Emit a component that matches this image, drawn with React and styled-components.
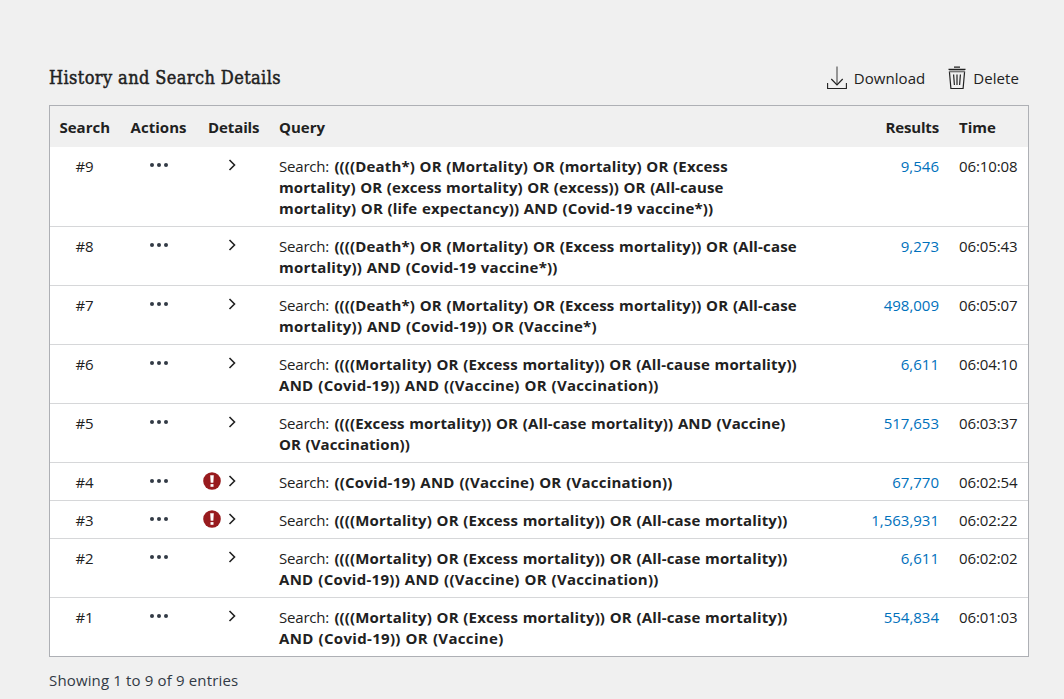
import React from "react";
import styled, { createGlobalStyle } from "styled-components";

const GlobalStyle = createGlobalStyle`
  *, *::before, *::after { box-sizing: border-box; }
  body {
    margin: 0;
    background: #f0f0f0;
    color: #212121;
    font-family: "Open Sans", "Noto Sans", sans-serif;
    font-size: 15px;
    line-height: 21px;
  }
`;

const Page = styled.main`
  width: 1064px;
  height: 699px;
  padding: 62px 35px 0 49px;
  overflow: hidden;
`;

const Heading = styled.header`
  display: flex;
  align-items: center;
  justify-content: space-between;
  height: 32px;
  margin-bottom: 11px;
  padding-right: 10px;
`;

const Title = styled.h2`
  margin: 0;
  padding-bottom: 2px;
  font-family: "DejaVu Serif Condensed", "DejaVu Serif", serif;
  font-stretch: condensed;
  font-size: 18px;
  font-weight: 400;
  letter-spacing: 0.4px;
  -webkit-text-stroke: 0.45px #212121;
  white-space: nowrap;
`;

const Tools = styled.div`
  display: flex;
  gap: 23px;
`;

const Tool = styled.button`
  display: flex;
  align-items: center;
  gap: 7px;
  padding: 0;
  border: 0;
  background: none;
  color: #212121;
  font: inherit;
  letter-spacing: 0.06px;
`;

const Table = styled.section`
  width: 980px;
  border: 1px solid #aeb0b5;
  background: #fff;
`;

const Row = styled.div`
  display: grid;
  grid-template-columns: 70px 78px 71px 561px 109px 89px;
  padding: 9px 0 7px;
  border-bottom: 1px solid #d6d7d9;
  &:last-child { border-bottom: 0; }
`;

const HeadRow = styled(Row)`
  height: 41px;
  padding: 11px 0 9px;
  border-bottom: 0;
  background: #f0f0f0;
  font-weight: 700;
`;

const Cell = styled.div`
  padding-left: ${(p) => p.$left || 0}px;
  text-align: ${(p) => p.$align || "left"};
  letter-spacing: ${(p) => p.$spacing || 0}px;
  white-space: nowrap;
`;

const NumberCell = styled(Cell)`
  padding-right: 1px;
`;

const IconCell = styled.div`
  display: flex;
  align-items: center;
  justify-content: flex-end;
  height: 17px;
  gap: 7px;
  padding-right: ${(p) => p.$right}px;
`;

const QueryCell = styled.div`
  padding-left: 10px;
`;

const Line = styled.div`
  white-space: nowrap;
`;

const Prefix = styled.span`
  display: inline-block;
  width: 55.4px;
  letter-spacing: -0.2px;
`;

const Term = styled.b`
  letter-spacing: ${(p) => p.$spacing}px;
  word-spacing: 0.6px;
`;

const Results = styled.a`
  color: #0071bc;
  text-align: right;
`;

const Footer = styled.footer`
  margin-top: 13px;
  color: #323a45;
  letter-spacing: 0.15px;
`;

const DownloadIcon = () => (
  <svg width="20" height="24" viewBox="0 0 20 24" fill="none" stroke="#212121">
    <path d="M10 .5v18" stroke="#777" strokeWidth="1.5" />
    <path d="M4.3 13l5.7 5.8 5.7-5.8" strokeWidth="1.2" />
    <path d="M.6 17v5.5h18.8V17" strokeWidth="1.1" />
  </svg>
);

const TrashIcon = () => (
  <svg width="18" height="24" viewBox="0 0 18 24" fill="none" stroke="#212121" strokeWidth="1.2">
    <path d="M.5 3.3h17M6 1.2h6M1.4 5.5l1.5 17h12.2l1.5-17M5.6 8.5l.8 10.5M9 8.5V19M12.4 8.5l-.8 10.5" />
    <path d="M1.2 5.4h15.6" stroke="#777" strokeWidth="1.9" />
  </svg>
);

const Dots = () => (
  <svg width="18" height="4" viewBox="0 0 18 4" fill="#323a45">
    <circle cx="2" cy="2" r="2" />
    <circle cx="9" cy="2" r="2" />
    <circle cx="16" cy="2" r="2" />
  </svg>
);

const Chevron = () => (
  <svg width="8" height="12" viewBox="0 0 8 12" fill="none" stroke="#212121" strokeWidth="1.6">
    <path d="M1.5 1l5 5-5 5" />
  </svg>
);

const Alert = () => (
  <svg width="18" height="18" viewBox="0 0 18 18">
    <circle cx="9" cy="9" r="8.8" fill="#981b1e" />
    <path d="M7.2 3.2h3.6l-.5 7.6H7.7z" fill="#fff" />
    <path d="M7.5 12.1h3v2.7h-3z" fill="#fff" />
  </svg>
);

const entries = [
  { n: 9, results: "9,546", time: "06:10:08", lines: [
    ["((((Death*) OR (Mortality) OR (mortality) OR (Excess", 0.14],
    ["mortality) OR (excess mortality) OR (excess)) OR (All-cause", 0.09],
    ["mortality) OR (life expectancy)) AND (Covid-19 vaccine*))", 0.15]] },
  { n: 8, results: "9,273", time: "06:05:43", lines: [
    ["((((Death*) OR (Mortality) OR (Excess mortality)) OR (All-case", 0.15],
    ["mortality)) AND (Covid-19 vaccine*))", 0.21]] },
  { n: 7, results: "498,009", time: "06:05:07", lines: [
    ["((((Death*) OR (Mortality) OR (Excess mortality)) OR (All-case", 0.15],
    ["mortality)) AND (Covid-19)) OR (Vaccine*)", 0.22]] },
  { n: 6, results: "6,611", time: "06:04:10", lines: [
    ["((((Mortality) OR (Excess mortality)) OR (All-cause mortality))", 0.14],
    ["AND (Covid-19)) AND ((Vaccine) OR (Vaccination))", 0.28]] },
  { n: 5, results: "517,653", time: "06:03:37", lines: [
    ["((((Excess mortality)) OR (All-case mortality)) AND (Vaccine)", 0.13],
    ["OR (Vaccination))", 0.08]] },
  { n: 4, results: "67,770", time: "06:02:54", alert: true, lines: [
    ["((Covid-19) AND ((Vaccine) OR (Vaccination))", 0.23]] },
  { n: 3, results: "1,563,931", time: "06:02:22", alert: true, lines: [
    ["((((Mortality) OR (Excess mortality)) OR (All-case mortality))", 0.15]] },
  { n: 2, results: "6,611", time: "06:02:02", lines: [
    ["((((Mortality) OR (Excess mortality)) OR (All-case mortality))", 0.15],
    ["AND (Covid-19)) AND ((Vaccine) OR (Vaccination))", 0.28]] },
  { n: 1, results: "554,834", time: "06:01:03", lines: [
    ["((((Mortality) OR (Excess mortality)) OR (All-case mortality))", 0.15],
    ["AND (Covid-19)) OR (Vaccine)", 0.33]] },
];

export default function App() {
  return (
    <Page>
      <GlobalStyle />
      <Heading>
        <Title>History and Search Details</Title>
        <Tools>
          <Tool><DownloadIcon />Download</Tool>
          <Tool><TrashIcon />Delete</Tool>
        </Tools>
      </Heading>
      <Table>
        <HeadRow>
          <Cell $left={9.5}>Search</Cell>
          <Cell $left={10.5} $spacing={0.05}>Actions</Cell>
          <Cell $left={10} $spacing={-0.1}>Details</Cell>
          <Cell $left={10}>Query</Cell>
          <Cell $align="right" $spacing={-0.15}>Results</Cell>
          <Cell $left={20}>Time</Cell>
        </HeadRow>
        {entries.map((e) => (
          <Row key={e.n}>
            <NumberCell $align="center" $spacing={-0.2}>#{e.n}</NumberCell>
            <IconCell $right={30.5}><Dots /></IconCell>
            <IconCell $right={33}>{e.alert && <Alert />}<Chevron /></IconCell>
            <QueryCell>
              {e.lines.map(([text, spacing], i) => (
                <Line key={i}>
                  {i === 0 && <Prefix>Search: </Prefix>}
                  <Term $spacing={spacing}>{text}</Term>
                </Line>
              ))}
            </QueryCell>
            <Results>{e.results}</Results>
            <Cell $left={20} $spacing={-0.12}>{e.time}</Cell>
          </Row>
        ))}
      </Table>
      <Footer>Showing 1 to 9 of 9 entries</Footer>
    </Page>
  );
}
